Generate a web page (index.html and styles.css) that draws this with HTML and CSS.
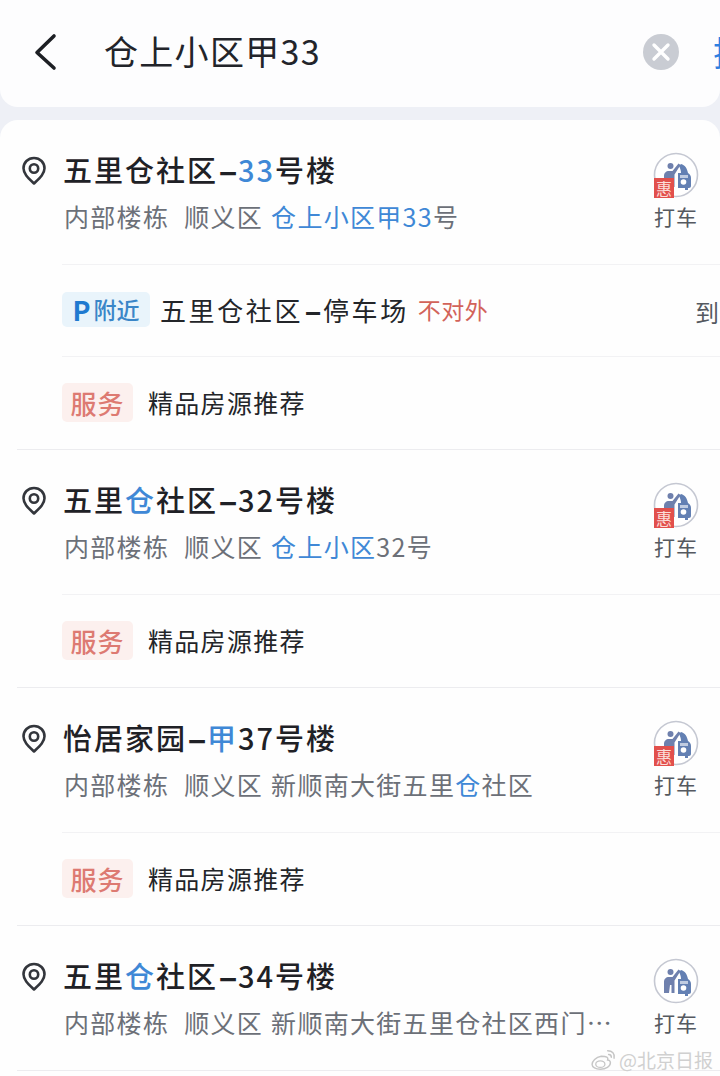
FILE: index.html
```html
<!DOCTYPE html>
<html lang="zh">
<head>
<meta charset="utf-8">
<title>搜索</title>
<link rel="stylesheet" href="styles.css">
</head>
<body>
<svg class="defs" width="0" height="0">
  <defs>
    <symbol id="pin" viewBox="0 0 26 30">
      <path d="M13 2C6.900 2 2.500 6.600 2.500 12.300c0 5.600 5 9.900 10.500 15.200 5.500-5.300 10.500-9.600 10.500-15.200C23.500 6.600 19.100 2 13 2z" fill="none" stroke="#33363c" stroke-width="2.600" stroke-linejoin="round"/>
      <circle cx="13" cy="12.500" r="4.200" fill="none" stroke="#33363c" stroke-width="2.600"/>
    </symbol>
    <symbol id="taxi" viewBox="0 0 46 46">
      <circle cx="23" cy="23" r="21.500" fill="#fff" stroke="#c5c8d2" stroke-width="1.600"/>
      <circle cx="17.500" cy="14" r="3" fill="#6f80ad"/>
      <path d="M11 35V24c0-3 2-5 5-5h3.500l6-7.500 2 1.500-6 9.500V35h-3v-8h-1.500l-1 8z" fill="#6f80ad"/>
      <path d="M28 12c4 1 6 4 7 9 2 1 3 3 3 5v8c0 1-1 2-2 2h-1v2h-3v-2h-7V21h3c0-3-1-5-2-7z" fill="#6380b3"/>
      <rect x="27" y="23" width="8" height="3" fill="#fff" opacity=".6"/>
      <circle cx="30.500" cy="30" r="2.800" fill="#fff"/>
    </symbol>
  </defs>
</svg>

<header class="topbar">
  <svg class="back" viewBox="0 0 26 38" width="26" height="38"><path d="M22 3 5 19.500 22 35" fill="none" stroke="#1d1f24" stroke-width="3.600" stroke-linecap="round" stroke-linejoin="round"/></svg>
  <div class="query">仓上小区甲33</div>
  <svg class="clear" viewBox="0 0 36 36" width="36" height="36"><circle cx="18" cy="18" r="18" fill="#c9ccd3"/><path d="M11 11l14 14M25 11 11 25" stroke="#fff" stroke-width="3.400" stroke-linecap="round"/></svg>
  <div class="action">搜</div>
</header>

<main class="list">
  <section class="result">
    <div class="main-row">
      <svg class="pin"><use href="#pin"/></svg>
      <div class="info">
        <h2 class="title">五里仓社区<span class="dash">–</span><em>33</em>号楼</h2>
        <p class="sub"><span>内部楼栋</span><span>顺义区</span><span class="addr"><em>仓上小区甲33</em>号</span></p>
      </div>
      <div class="ride">
        <span class="ride-icon"><svg><use href="#taxi"/></svg><i class="hui">惠</i></span>
        <span class="ride-label">打车</span>
      </div>
    </div>
    <div class="extra park">
      <span class="tag tag-p"><b>P</b>附近</span>
      <span class="park-name">五里仓社区<span class="dash">–</span>停车场</span>
      <span class="closed">不对外</span>
      <span class="to">到</span>
    </div>
    <div class="extra">
      <span class="tag tag-s">服务</span>
      <span class="svc">精品房源推荐</span>
    </div>
  </section>

  <section class="result">
    <div class="main-row">
      <svg class="pin"><use href="#pin"/></svg>
      <div class="info">
        <h2 class="title">五里<em>仓</em>社区<span class="dash">–</span>32号楼</h2>
        <p class="sub"><span>内部楼栋</span><span>顺义区</span><span class="addr"><em>仓上小区</em>32号</span></p>
      </div>
      <div class="ride">
        <span class="ride-icon"><svg><use href="#taxi"/></svg><i class="hui">惠</i></span>
        <span class="ride-label">打车</span>
      </div>
    </div>
    <div class="extra">
      <span class="tag tag-s">服务</span>
      <span class="svc">精品房源推荐</span>
    </div>
  </section>

  <section class="result">
    <div class="main-row">
      <svg class="pin"><use href="#pin"/></svg>
      <div class="info">
        <h2 class="title">怡居家园<span class="dash">–</span><em>甲</em>37号楼</h2>
        <p class="sub"><span>内部楼栋</span><span>顺义区</span><span class="addr">新顺南大街五里<em>仓</em>社区</span></p>
      </div>
      <div class="ride">
        <span class="ride-icon"><svg><use href="#taxi"/></svg><i class="hui">惠</i></span>
        <span class="ride-label">打车</span>
      </div>
    </div>
    <div class="extra">
      <span class="tag tag-s">服务</span>
      <span class="svc">精品房源推荐</span>
    </div>
  </section>

  <section class="result">
    <div class="main-row">
      <svg class="pin"><use href="#pin"/></svg>
      <div class="info">
        <h2 class="title">五里<em>仓</em>社区<span class="dash">–</span>34号楼</h2>
        <p class="sub"><span>内部楼栋</span><span>顺义区</span><span class="addr">新顺南大街五里仓社区西门…</span></p>
      </div>
      <div class="ride">
        <span class="ride-icon"><svg><use href="#taxi"/></svg></span>
        <span class="ride-label">打车</span>
      </div>
    </div>
  </section>
</main>

<div class="watermark">
  <svg viewBox="0 0 30 24" width="28" height="22"><path d="M12 8C6 9 2 13 2 17c0 3 4 5 9 5 6 0 11-3 11-7 0-2-2-3-3-3 1-3-1-4-7-4z" fill="none" stroke="#c6c6c6" stroke-width="1.600"/><ellipse cx="11" cy="16.500" rx="5" ry="3.500" fill="none" stroke="#c6c6c6" stroke-width="1.400"/><path d="M19 2c5 0 8 3 7 8M20 6c2 0 3 1 3 3" fill="none" stroke="#c6c6c6" stroke-width="1.600" stroke-linecap="round"/></svg>
  <span>@北京日报</span>
</div>
</body>
</html>
```

FILE: styles.css
```css
* { box-sizing: border-box; }
html, body { margin: 0; padding: 0; }
body {
  width: 720px;
  height: 1076px;
  overflow: hidden;
  position: relative;
  background: #eef0f6;
  font-family: "Noto Sans CJK SC", "Noto Sans", sans-serif;
  color: #1d1f24;
}
em { font-style: normal; color: #3f88d6; }
.defs { position: absolute; }

.topbar {
  height: 107px;
  background: #fdfdfe;
  border-radius: 0 0 18px 18px;
  display: flex;
  align-items: center;
  overflow: hidden;
  padding: 0 0 4px 32px;
}
.back { flex: none; }
.query {
  margin: -2px 0 0 46px;
  width: 539px;
  flex: none;
  font-size: 34px;
  line-height: 44px;
  letter-spacing: 1.300px;
  color: #22242a;
}
.clear { flex: none; margin-left: 0; }
.action {
  flex: none;
  margin-left: 34px;
  font-size: 34px;
  line-height: 44px;
  color: #2f7fe0;
}

.list {
  margin-top: 13px;
  background: #fefefe;
  border-radius: 18px 18px 0 0;
  padding: 0 0 0 17px;
  height: 956px;
}
.result { border-bottom: 1px solid #ececef; }
.main-row {
  height: 144px;
  display: flex;
  align-items: flex-start;
  padding-top: 28px;
  overflow: hidden;
}
.pin { flex: none; width: 26px; height: 30px; margin: 8px 0 0 4px; }
.info { flex: none; width: 591px; margin-left: 16px; }
.title {
  margin: 0;
  font-size: 29px;
  font-weight: 500;
  line-height: 42px;
  letter-spacing: 2px;
  white-space: nowrap;
  color: #1f2126;
}
.dash { display: inline-block; width: 20px; text-align: center; letter-spacing: 0; font-weight: 900; transform: scaleX(1.2); }
.sub {
  margin: 8px 0 0;
  display: flex;
  gap: 15px;
  padding-left: 1px;
  font-size: 25px;
  line-height: 36px;
  letter-spacing: 1.300px;
  white-space: nowrap;
  color: #6c7078;
}
.addr { margin-left: -7px; }
.ride {
  flex: none;
  width: 46px;
  margin: 4px 0 0 -1px;
  display: flex;
  flex-direction: column;
  align-items: center;
}
.ride-icon { position: relative; display: block; width: 46px; height: 46px; }
.ride-icon svg { display: block; width: 46px; height: 46px; }
.hui {
  position: absolute;
  left: 1px;
  bottom: 0;
  width: 20px;
  height: 20px;
  background: #e2504c;
  color: #fbdcd9;
  font-size: 16px;
  line-height: 20px;
  font-style: normal;
  text-align: center;
}
.ride-label {
  margin-top: 5px;
  font-size: 21px;
  line-height: 26px;
  letter-spacing: 1px;
  white-space: nowrap;
  color: #555960;
}

.extra {
  margin-left: 45px;
  height: 93px;
  display: flex;
  align-items: center;
  border-top: 1px solid #f2f2f4;
  white-space: nowrap;
  position: relative;
  padding-bottom: 2px;
}
.park { height: 92px; padding-bottom: 3px; }
.tag {
  flex: none;
  display: flex;
  align-items: center;
  justify-content: center;
  border-radius: 5px;
}
.tag-s {
  width: 71px;
  height: 39px;
  background: #fcf0ee;
  color: #dd7a72;
  font-size: 26px;
  font-weight: 500;
  letter-spacing: 1px;
}
.tag-p {
  width: 88px;
  height: 35px;
  background: #e9f4fb;
  color: #3a86c8;
  font-size: 23px;
  font-weight: 500;
}
.tag-p b { font-size: 27px; font-weight: 700; color: #1f7ad0; margin-right: 3px; }
.svc { margin-left: 15px; font-size: 25px; letter-spacing: 1.300px; color: #232529; }
.park-name { margin-left: 10px; font-size: 26px; letter-spacing: 2.600px; color: #232529; }
.closed { margin-left: 9px; font-size: 23px; letter-spacing: 0.500px; color: #d2635a; }
.to { position: absolute; left: 633px; top: 50%; transform: translateY(-50%); font-size: 24px; color: #555960; }

.watermark {
  position: absolute;
  left: 590px;
  top: 1046px;
  display: flex;
  align-items: center;
  gap: 1px;
  font-size: 19px;
  line-height: 28px;
  color: #d0d0d0;
  white-space: nowrap;
}
```
